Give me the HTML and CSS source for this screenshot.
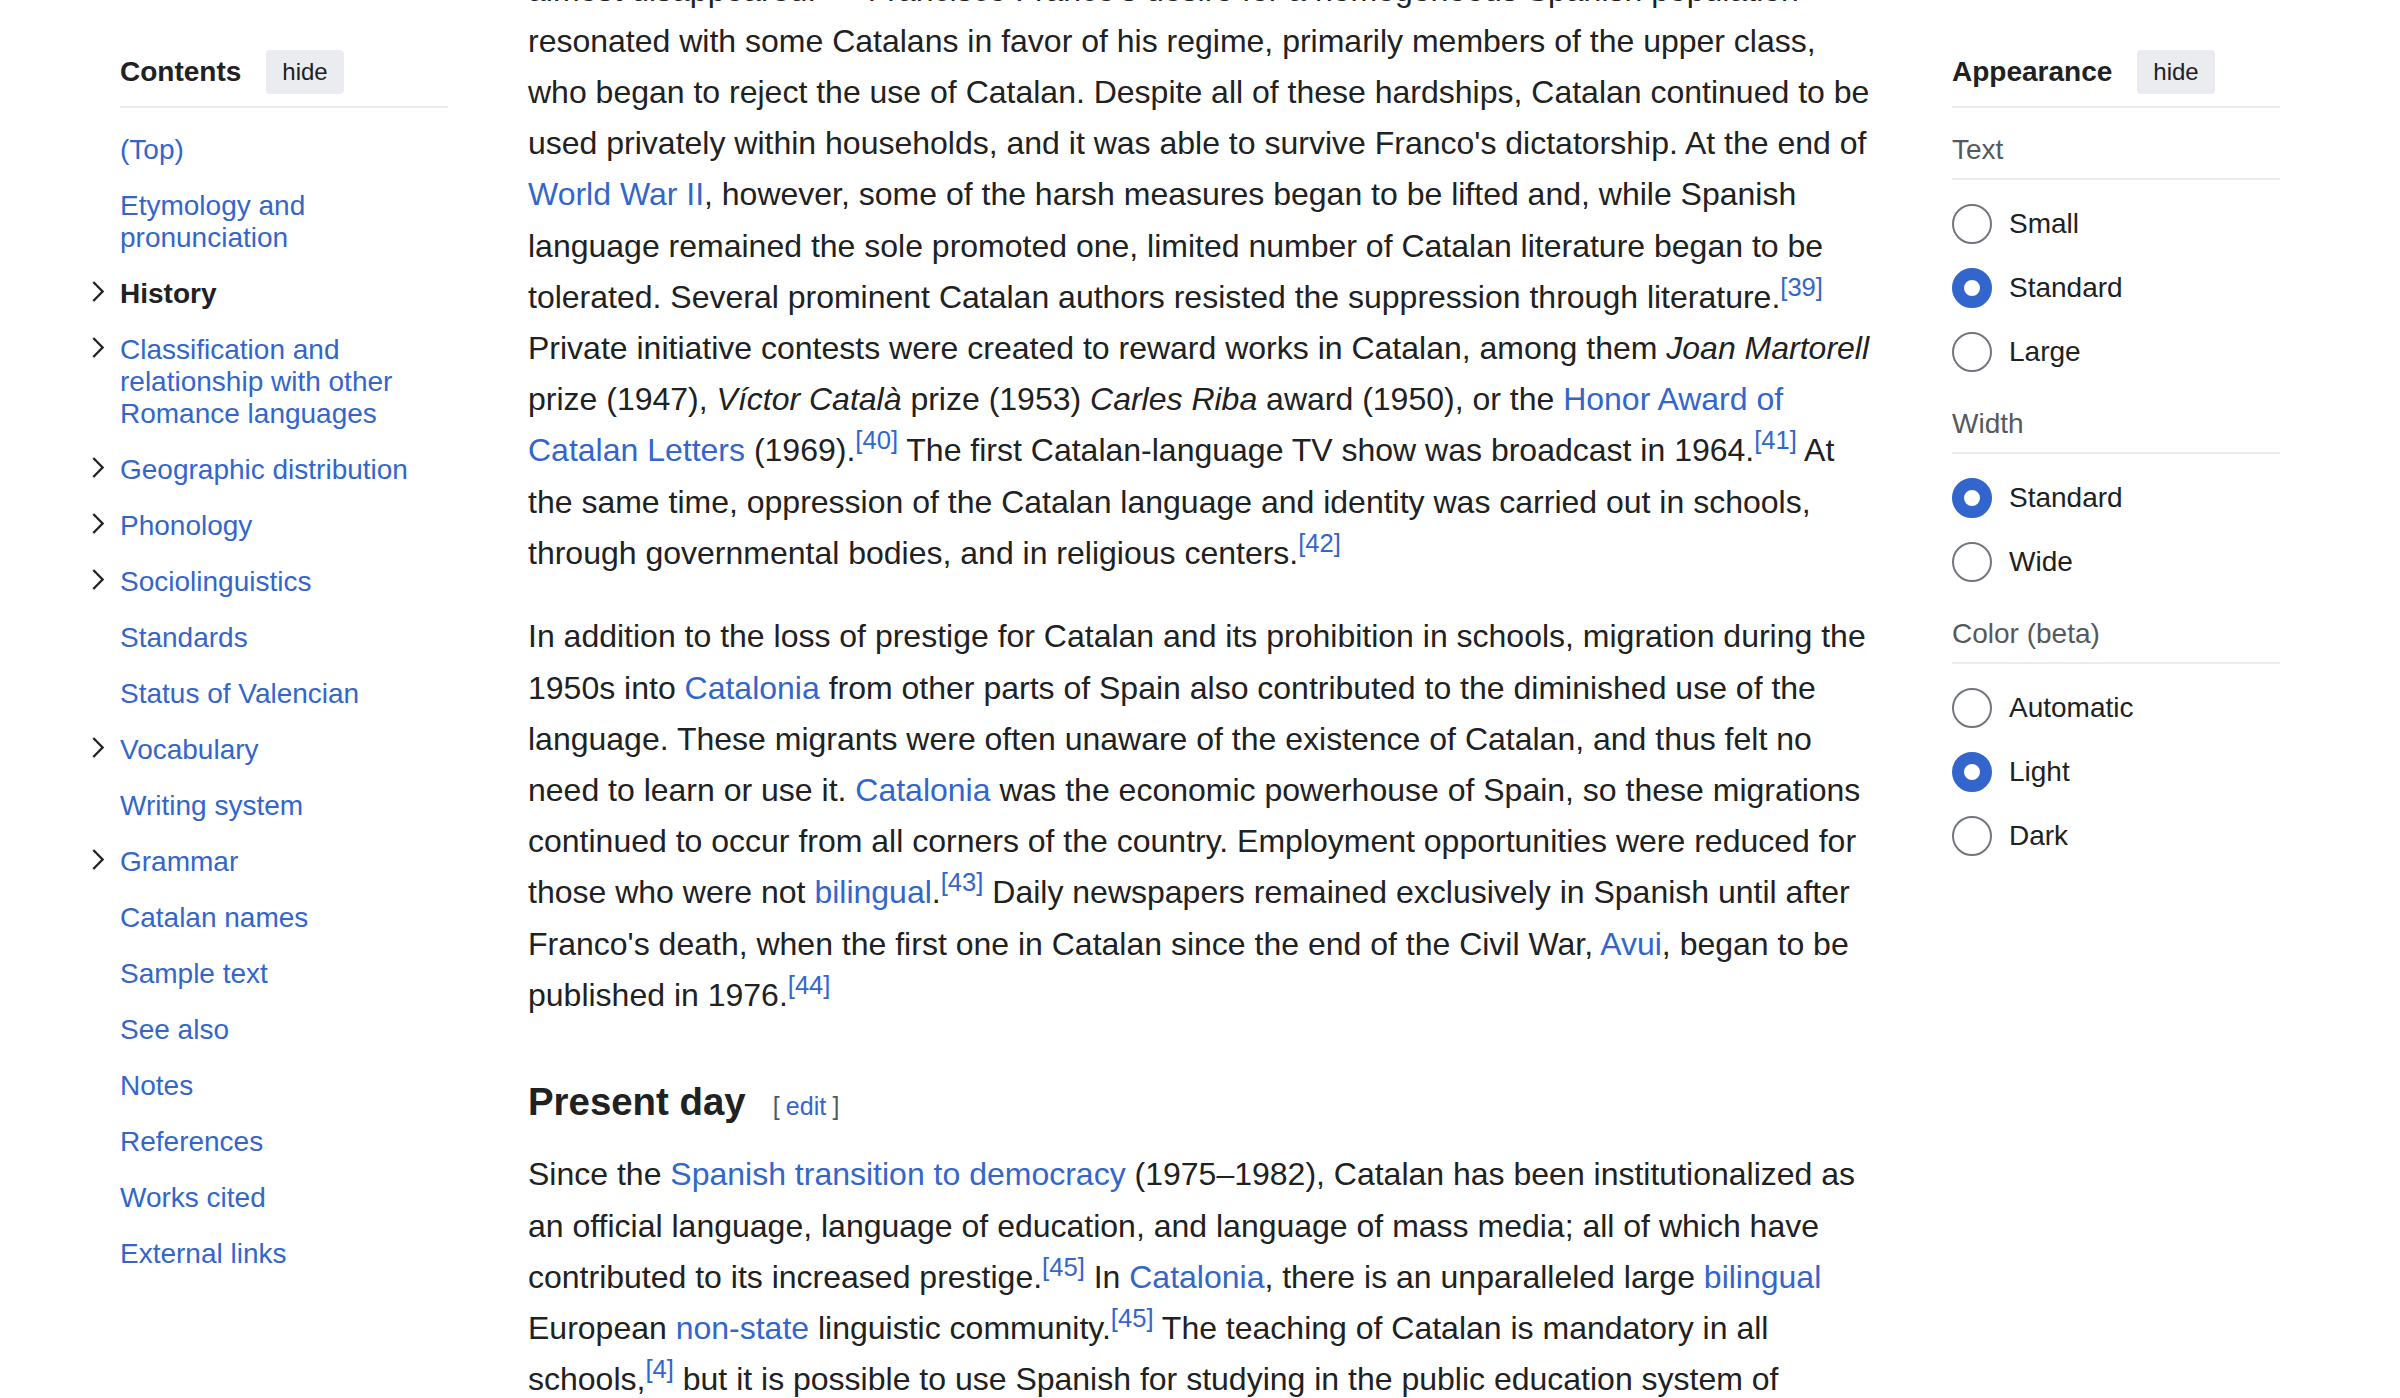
FILE: index.html
```html
<!DOCTYPE html>
<html lang="en">
<head>
<meta charset="utf-8">
<title>Catalan language</title>
<link rel="stylesheet" href="styles.css">
</head>
<body>
<div class="page">
  <nav class="toc">
    <div class="pinnable-header">
      <span class="pinnable-title">Contents</span>
      <button class="hide-btn">hide</button>
    </div>
    <ul class="toc-list">
      <li class="toc-item"><span class="toc-toggle"></span><a href="#">(Top)</a></li>
      <li class="toc-item"><span class="toc-toggle"></span><a href="#">Etymology and pronunciation</a></li>
      <li class="toc-item active"><span class="toc-toggle"><svg width="12" height="21" viewBox="0 0 12 21"><polyline points="1.3,1 10.6,10.5 1.3,20" /></svg></span><a href="#">History</a></li>
      <li class="toc-item"><span class="toc-toggle"><svg width="12" height="21" viewBox="0 0 12 21"><polyline points="1.3,1 10.6,10.5 1.3,20" /></svg></span><a href="#">Classification and relationship with other Romance languages</a></li>
      <li class="toc-item"><span class="toc-toggle"><svg width="12" height="21" viewBox="0 0 12 21"><polyline points="1.3,1 10.6,10.5 1.3,20" /></svg></span><a href="#">Geographic distribution</a></li>
      <li class="toc-item"><span class="toc-toggle"><svg width="12" height="21" viewBox="0 0 12 21"><polyline points="1.3,1 10.6,10.5 1.3,20" /></svg></span><a href="#">Phonology</a></li>
      <li class="toc-item"><span class="toc-toggle"><svg width="12" height="21" viewBox="0 0 12 21"><polyline points="1.3,1 10.6,10.5 1.3,20" /></svg></span><a href="#">Sociolinguistics</a></li>
      <li class="toc-item"><span class="toc-toggle"></span><a href="#">Standards</a></li>
      <li class="toc-item"><span class="toc-toggle"></span><a href="#">Status of Valencian</a></li>
      <li class="toc-item"><span class="toc-toggle"><svg width="12" height="21" viewBox="0 0 12 21"><polyline points="1.3,1 10.6,10.5 1.3,20" /></svg></span><a href="#">Vocabulary</a></li>
      <li class="toc-item"><span class="toc-toggle"></span><a href="#">Writing system</a></li>
      <li class="toc-item"><span class="toc-toggle"><svg width="12" height="21" viewBox="0 0 12 21"><polyline points="1.3,1 10.6,10.5 1.3,20" /></svg></span><a href="#">Grammar</a></li>
      <li class="toc-item"><span class="toc-toggle"></span><a href="#">Catalan names</a></li>
      <li class="toc-item"><span class="toc-toggle"></span><a href="#">Sample text</a></li>
      <li class="toc-item"><span class="toc-toggle"></span><a href="#">See also</a></li>
      <li class="toc-item"><span class="toc-toggle"></span><a href="#">Notes</a></li>
      <li class="toc-item"><span class="toc-toggle"></span><a href="#">References</a></li>
      <li class="toc-item"><span class="toc-toggle"></span><a href="#">Works cited</a></li>
      <li class="toc-item"><span class="toc-toggle"></span><a href="#">External links</a></li>
    </ul>
  </nav>

  <main class="main">
    <p>almost disappeared.<sup><a href="#">[38]</a></sup> Francisco Franco's desire for a homogeneous Spanish population resonated with some Catalans in favor of his regime, primarily members of the upper class, who began to reject the use of Catalan. Despite all of these hardships, Catalan continued to be used privately within households, and it was able to survive Franco's dictatorship. At the end of <a href="#">World War II</a>, however, some of the harsh measures began to be lifted and, while Spanish language remained the sole promoted one, limited number of Catalan literature began to be tolerated. Several prominent Catalan authors resisted the suppression through literature.<sup><a href="#">[39]</a></sup> Private initiative contests were created to reward works in Catalan, among them <i>Joan Martorell</i> prize (1947), <i>Víctor Català</i> prize (1953) <i>Carles Riba</i> award (1950), or the <a href="#">Honor Award of Catalan Letters</a> (1969).<sup><a href="#">[40]</a></sup> The first Catalan-language TV show was broadcast in 1964.<sup><a href="#">[41]</a></sup> At the same time, oppression of the Catalan language and identity was carried out in schools, through governmental bodies, and in religious centers.<sup><a href="#">[42]</a></sup></p>
    <p>In addition to the loss of prestige for Catalan and its prohibition in schools, migration during the 1950s into <a href="#">Catalonia</a> from other parts of Spain also contributed to the diminished use of the language. These migrants were often unaware of the existence of Catalan, and thus felt no need to learn or use it. <a href="#">Catalonia</a> was the economic powerhouse of Spain, so these migrations continued to occur from all corners of the country. Employment opportunities were reduced for those who were not <a href="#">bilingual</a>.<sup><a href="#">[43]</a></sup> Daily newspapers remained exclusively in Spanish until after Franco's death, when the first one in Catalan since the end of the Civil War, <a href="#">Avui</a>, began to be published in 1976.<sup><a href="#">[44]</a></sup></p>
    <h3><span class="headline">Present day</span><span class="editsection"><span class="bracket">[</span><a href="#">edit</a><span class="bracket">]</span></span></h3>
    <p>Since the <a href="#">Spanish transition to democracy</a> (1975–1982), Catalan has been institutionalized as an official language, language of education, and language of mass media; all of which have contributed to its increased prestige.<sup><a href="#">[45]</a></sup> In <a href="#">Catalonia</a>, there is an unparalleled large <a href="#">bilingual</a> European <a href="#">non-state</a> linguistic community.<sup><a href="#">[45]</a></sup> The teaching of Catalan is mandatory in all schools,<sup><a href="#">[4]</a></sup> but it is possible to use Spanish for studying in the public education system of Catalonia in two situations.</p>
  </main>

  <aside class="appearance">
    <div class="pinnable-header">
      <span class="pinnable-title">Appearance</span>
      <button class="hide-btn">hide</button>
    </div>
    <div class="app-section first">
      <div class="app-heading">Text</div>
      <div class="radio-list">
        <label class="radio"><input type="radio" name="text"><span>Small</span></label>
        <label class="radio"><input type="radio" name="text" checked><span>Standard</span></label>
        <label class="radio"><input type="radio" name="text"><span>Large</span></label>
      </div>
    </div>
    <div class="app-section">
      <div class="app-heading">Width</div>
      <div class="radio-list">
        <label class="radio"><input type="radio" name="width" checked><span>Standard</span></label>
        <label class="radio"><input type="radio" name="width"><span>Wide</span></label>
      </div>
    </div>
    <div class="app-section">
      <div class="app-heading">Color (beta)</div>
      <div class="radio-list">
        <label class="radio"><input type="radio" name="color"><span>Automatic</span></label>
        <label class="radio"><input type="radio" name="color" checked><span>Light</span></label>
        <label class="radio"><input type="radio" name="color"><span>Dark</span></label>
      </div>
    </div>
  </aside>
</div>
</body>
</html>
```

FILE: styles.css
```css
* { box-sizing: border-box; }

html, body {
  margin: 0;
  padding: 0;
  background: #ffffff;
}

body {
  font-family: "Liberation Sans", Arial, Helvetica, sans-serif;
  color: #202122;
  height: 1398px;
  overflow: hidden;
}

a {
  color: #3366cc;
  text-decoration: none;
}

.page {
  display: flex;
  align-items: flex-start;
  padding: 0 120px;
}

/* ---------- pinnable headers ---------- */
.pinnable-header {
  display: flex;
  align-items: center;
  gap: 25px;
  padding-bottom: 12px;
  border-bottom: 2px solid #eaecf0;
}

.pinnable-title {
  font-size: 28px;
  line-height: 32px;
  font-weight: bold;
}

.hide-btn {
  height: 44px;
  padding: 0 16px;
  font-family: "Liberation Sans", Arial, Helvetica, sans-serif;
  font-size: 24px;
  line-height: 44px;
  color: #202122;
  background: #eaecf0;
  border: none;
  border-radius: 4px;
}

/* ---------- table of contents ---------- */
.toc {
  width: 328px;
  flex: none;
  padding-top: 50px;
}

.toc-list {
  list-style: none;
  margin: 0 0 0 -38px;
  padding: 14px 0 0 0;
}

.toc-item {
  display: flex;
  align-items: flex-start;
  padding: 12px 0;
  font-size: 28px;
  line-height: 32px;
}

.toc-toggle {
  width: 38px;
  height: 32px;
  flex: none;
  padding: 3px 0 0 9.5px;
}

.toc-toggle svg {
  display: block;
}

.toc-toggle polyline {
  fill: none;
  stroke: #202122;
  stroke-width: 2.3;
}

.toc-item.active a {
  color: #202122;
  font-weight: bold;
}

/* ---------- main content ---------- */
.main {
  width: 1348px;
  flex: none;
  margin-left: 80px;
  margin-top: -35.5px;
  font-size: 32px;
  line-height: 51.2px;
}

.main p {
  margin: 0 0 32.5px;
}

.main h3 {
  font-size: 38.4px;
  line-height: 61.4px;
  font-weight: bold;
  margin: 50px 0 11.9px;
  color: #202122;
}

.editsection {
  font-size: 25px;
  font-weight: normal;
  margin-left: 27px;
}

.editsection .bracket {
  color: #54595d;
}

.editsection a {
  margin: 0 0.25em;
}

sup {
  font-size: 80%;
  line-height: 1;
  vertical-align: super;
}

/* ---------- appearance ---------- */
.appearance {
  width: 328px;
  flex: none;
  margin-left: 76px;
  padding-top: 50px;
}

.app-section {
  margin-top: 36px;
}

.app-section.first {
  margin-top: 25.5px;
}

.app-heading {
  font-size: 28px;
  line-height: 32px;
  color: #54595d;
  padding-bottom: 12px;
  border-bottom: 2px solid #eaecf0;
}

.radio-list {
  display: flex;
  flex-direction: column;
  gap: 24px;
  margin-top: 24px;
}

.radio {
  display: flex;
  align-items: center;
  gap: 17px;
  height: 40px;
  font-size: 28px;
  line-height: 32px;
  color: #202122;
}

.radio input {
  appearance: none;
  -webkit-appearance: none;
  margin: 0;
  width: 40px;
  height: 40px;
  flex: none;
  border-radius: 50%;
  border: 2px solid #72777d;
  background: #ffffff;
}

.radio input:checked {
  border: 12px solid #3366cc;
}
```
